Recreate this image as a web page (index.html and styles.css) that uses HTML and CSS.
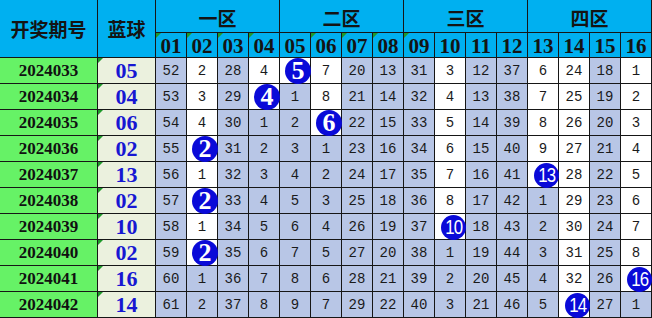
FILE: index.html
```html
<!DOCTYPE html>
<html lang="zh">
<head>
<meta charset="utf-8">
<title>蓝球走势</title>
<link rel="stylesheet" href="styles.css">
</head>
<body>
<div class="sheet">
  <div class="h h-tall">开奖期号</div>
  <div class="h h-tall">蓝球</div>
  <div class="h zone">一区</div>
  <div class="h zone">二区</div>
  <div class="h zone">三区</div>
  <div class="h zone">四区</div>
  <div class="h hn tri">01</div><div class="h hn tri">02</div><div class="h hn tri">03</div><div class="h hn tri">04</div>
  <div class="h hn">05</div><div class="h hn tri">06</div><div class="h hn tri">07</div><div class="h hn tri">08</div>
  <div class="h hn tri">09</div><div class="h hn">10</div><div class="h hn">11</div><div class="h hn">12</div>
  <div class="h hn">13</div><div class="h hn">14</div><div class="h hn">15</div><div class="h hn">16</div>

  <div class="per">2024033</div><div class="blue tri">05</div>
  <div class="n s">52</div><div class="n">2</div><div class="n s">28</div><div class="n">4</div><div class="n hit"><span class="ball">5</span></div><div class="n">7</div><div class="n s">20</div><div class="n s">13</div><div class="n s">31</div><div class="n">3</div><div class="n s">12</div><div class="n s">37</div><div class="n">6</div><div class="n">24</div><div class="n s">18</div><div class="n">1</div>

  <div class="per">2024034</div><div class="blue tri">04</div>
  <div class="n s">53</div><div class="n">3</div><div class="n s">29</div><div class="n hit"><span class="ball">4</span></div><div class="n s">1</div><div class="n">8</div><div class="n s">21</div><div class="n s">14</div><div class="n s">32</div><div class="n">4</div><div class="n s">13</div><div class="n s">38</div><div class="n">7</div><div class="n">25</div><div class="n s">19</div><div class="n">2</div>

  <div class="per">2024035</div><div class="blue tri">06</div>
  <div class="n s">54</div><div class="n">4</div><div class="n s">30</div><div class="n s">1</div><div class="n s">2</div><div class="n hit"><span class="ball">6</span></div><div class="n s">22</div><div class="n s">15</div><div class="n s">33</div><div class="n">5</div><div class="n s">14</div><div class="n s">39</div><div class="n">8</div><div class="n">26</div><div class="n s">20</div><div class="n">3</div>

  <div class="per">2024036</div><div class="blue tri">02</div>
  <div class="n s">55</div><div class="n hit"><span class="ball">2</span></div><div class="n s">31</div><div class="n s">2</div><div class="n s">3</div><div class="n s">1</div><div class="n s">23</div><div class="n s">16</div><div class="n s">34</div><div class="n">6</div><div class="n s">15</div><div class="n s">40</div><div class="n">9</div><div class="n">27</div><div class="n s">21</div><div class="n">4</div>

  <div class="per">2024037</div><div class="blue tri">13</div>
  <div class="n s">56</div><div class="n">1</div><div class="n s">32</div><div class="n s">3</div><div class="n s">4</div><div class="n s">2</div><div class="n s">24</div><div class="n s">17</div><div class="n s">35</div><div class="n">7</div><div class="n s">16</div><div class="n s">41</div><div class="n hit"><span class="ball wide"><span class="nar">13</span></span></div><div class="n">28</div><div class="n s">22</div><div class="n">5</div>

  <div class="per">2024038</div><div class="blue tri">02</div>
  <div class="n s">57</div><div class="n hit"><span class="ball">2</span></div><div class="n s">33</div><div class="n s">4</div><div class="n s">5</div><div class="n s">3</div><div class="n s">25</div><div class="n s">18</div><div class="n s">36</div><div class="n">8</div><div class="n s">17</div><div class="n s">42</div><div class="n s">1</div><div class="n">29</div><div class="n s">23</div><div class="n">6</div>

  <div class="per">2024039</div><div class="blue tri">10</div>
  <div class="n s">58</div><div class="n">1</div><div class="n s">34</div><div class="n s">5</div><div class="n s">6</div><div class="n s">4</div><div class="n s">26</div><div class="n s">19</div><div class="n s">37</div><div class="n hit"><span class="ball wide"><span class="nar">10</span></span></div><div class="n s">18</div><div class="n s">43</div><div class="n s">2</div><div class="n">30</div><div class="n s">24</div><div class="n">7</div>

  <div class="per">2024040</div><div class="blue tri">02</div>
  <div class="n s">59</div><div class="n hit"><span class="ball">2</span></div><div class="n s">35</div><div class="n s">6</div><div class="n s">7</div><div class="n s">5</div><div class="n s">27</div><div class="n s">20</div><div class="n s">38</div><div class="n s">1</div><div class="n s">19</div><div class="n s">44</div><div class="n s">3</div><div class="n">31</div><div class="n s">25</div><div class="n">8</div>

  <div class="per">2024041</div><div class="blue tri">16</div>
  <div class="n s">60</div><div class="n s">1</div><div class="n s">36</div><div class="n s">7</div><div class="n s">8</div><div class="n s">6</div><div class="n s">28</div><div class="n s">21</div><div class="n s">39</div><div class="n s">2</div><div class="n s">20</div><div class="n s">45</div><div class="n s">4</div><div class="n">32</div><div class="n s">26</div><div class="n hit"><span class="ball wide"><span class="nar">16</span></span></div>

  <div class="per">2024042</div><div class="blue tri">14</div>
  <div class="n s">61</div><div class="n s">2</div><div class="n s">37</div><div class="n s">8</div><div class="n s">9</div><div class="n s">7</div><div class="n s">29</div><div class="n s">22</div><div class="n s">40</div><div class="n s">3</div><div class="n s">21</div><div class="n s">46</div><div class="n s">5</div><div class="n hit"><span class="ball wide"><span class="nar">14</span></span></div><div class="n s">27</div><div class="n s">1</div>
</div>
</body>
</html>
```

FILE: styles.css
```css
html, body {
  margin: 0;
  padding: 0;
  background: #ffffff;
}

.sheet {
  display: grid;
  grid-template-columns: 97px 57px repeat(16, 30px);
  grid-template-rows: 32px 24px repeat(10, 25px);
  gap: 1px;
  padding: 0 1px 1px 0;
  background: #161616;
  width: max-content;
}

.sheet > div {
  display: flex;
  align-items: center;
  justify-content: center;
  position: relative;
}

.h {
  background: #00b0f0;
  color: #141414;
  font-family: "Noto Sans CJK SC", sans-serif;
  font-weight: 700;
  font-size: 19px;
}

.h-tall {
  grid-row: span 2;
}

.zone {
  grid-column: span 4;
  padding-top: 2px;
}

.hn {
  font-family: "Liberation Serif", serif;
  font-weight: 700;
  font-size: 21px;
  padding-top: 2px;
}

.tri::before {
  content: "";
  position: absolute;
  left: 0;
  top: 0;
  border-top: 5px solid #1f9a2a;
  border-right: 5px solid transparent;
}

.per {
  background: #66f266;
  font-family: "Liberation Serif", serif;
  font-weight: 700;
  font-size: 17px;
  color: #111;
  padding-top: 1px;
}

.blue {
  background: #ebf1de;
  font-family: "Liberation Serif", serif;
  font-weight: 700;
  font-size: 22px;
  color: #1717d2;
  padding-top: 1px;
}

.n {
  background: #ffffff;
  font-family: "Liberation Mono", monospace;
  font-size: 14px;
  color: #1a1a1a;
  padding-top: 1px;
}

.n.s {
  background: #b8c6e6;
}

.ball {
  position: absolute;
  z-index: 2;
  left: 50%;
  top: 50%;
  width: 26px;
  height: 26px;
  margin: -13px 0 0 -10px;
  border-radius: 50%;
  background: #0a0ad8;
  color: #ffffff;
  font-family: "Liberation Serif", serif;
  font-weight: 700;
  font-size: 26px;
  line-height: 26px;
  display: flex;
  align-items: center;
  justify-content: center;
}

.ball.wide {
  width: 25px;
  height: 25px;
  margin: -12px 0 0 -9px;
  font-family: "Liberation Sans", sans-serif;
  font-weight: 400;
  font-size: 21px;
  letter-spacing: -1px;
}

.nar {
  display: inline-block;
  transform: scaleX(0.8);
}
```
